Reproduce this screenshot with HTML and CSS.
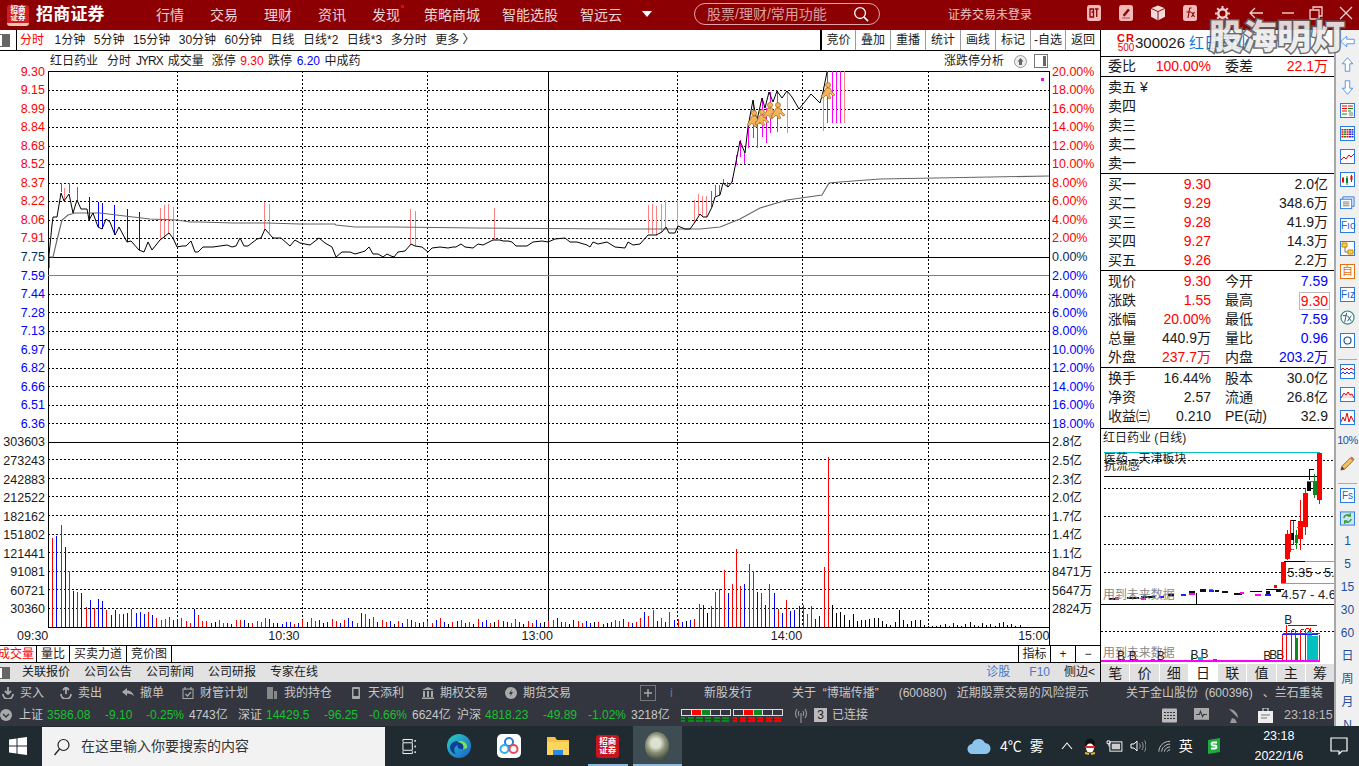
FILE: index.html
```html
<!DOCTYPE html>
<html lang="zh">
<head>
<meta charset="utf-8">
<title>招商证券</title>
<link rel="stylesheet" href="styles.css">
</head>
<body>
<div class="app">
  <header class="titlebar">
    <div class="logo"><span>招商</span><span>证券</span></div>
    <div class="brand">招商证券</div>
    <nav class="menu">
      <a>行情</a><a>交易</a><a>理财</a><a>资讯</a><a class="dotted">发现</a>
    </nav>
    <nav class="menu menu-long">
      <a>策略商城</a><a>智能选股</a><a>智远云</a>
    </nav>
    <span class="menu-more"></span>
    <div class="search">
      <span>股票/理财/常用功能</span>
      <svg class="ico-search" viewBox="0 0 18 18"><circle cx="7.5" cy="7.5" r="5.7" fill="none" stroke="#fff" stroke-width="1.4"/><path d="M11.5 11.5L16 16" stroke="#fff" stroke-width="1.6"/></svg>
    </div>
    <div class="login">证券交易未登录</div>
    <div class="winbtns">
      <svg class="wb" viewBox="0 0 14 16"><rect width="14" height="16" rx="2.5" fill="#f3b9b9"/><path d="M3 4h3.5v8H3zM4.6 7h1.6M8 4h3.5M9.7 4v8" stroke="#8c0004" stroke-width="1.3" fill="none"/></svg>
      <svg class="wb" viewBox="0 0 14 16"><rect width="14" height="16" rx="2.5" fill="#f3b9b9"/><path d="M3 13h8M4 10l5-6 1.5 1.2-5 6z" fill="#8c0004" stroke="#8c0004" stroke-width=".6"/></svg>
      <svg class="wb" viewBox="0 0 15 16"><path d="M7.5 0L15 3v9l-7.5 4L0 12V3z" fill="#f3d9d9"/><path d="M0 3l7.5 3.5L15 3M7.5 6.5V16" stroke="#8c0004" fill="none"/></svg>
      <svg class="wb" viewBox="0 0 14 16"><rect width="14" height="16" rx="2.5" fill="#f3b9b9"/><path d="M5 13l1.5-9c.2-1 1-1.200 2-1M3.500 7H8M8.500 7l3 5M11.500 7l-3 5" stroke="#8c0004" stroke-width="1.100" fill="none"/></svg>
      <svg class="wb wb-gear" viewBox="0 0 16 16"><circle cx="8" cy="8" r="4.500" fill="none" stroke="#f3d0d0" stroke-width="2.600"/><path d="M8 0v3M8 13v3M0 8h3M13 8h3M2.300 2.300l2.100 2.100M11.600 11.600l2.100 2.100M13.700 2.300l-2.100 2.100M4.400 11.600l-2.100 2.100" stroke="#f3d0d0" stroke-width="2.200"/></svg>
      <svg class="wb wb-arrow" viewBox="0 0 14 12"><path d="M14 6H1M6 1L1 6l5 5" fill="none" stroke="#f3d0d0" stroke-width="1.300"/></svg>
      <svg class="wb wb-min" viewBox="0 0 14 12"><path d="M1 6h12" stroke="#f3d0d0" stroke-width="1.400"/></svg>
      <svg class="wb wb-res" viewBox="0 0 14 14"><path d="M4 3V1h9v9h-3M1 4h9v9H1z" fill="none" stroke="#f3d0d0" stroke-width="1.300"/></svg>
      <svg class="wb wb-close" viewBox="0 0 14 14"><path d="M1 1l12 12M13 1L1 13" stroke="#f3d0d0" stroke-width="1.300"/></svg>
    </div>
  </header>

  <div class="workspace">
    <div class="content">
      <div class="upper">
        <section class="chartcol">
          <div class="toolbar">
            <span class="tool-box"></span>
            <div class="periods">
              <a class="on">分时</a><a>1分钟</a><a>5分钟</a><a>15分钟</a><a>30分钟</a><a>60分钟</a><a>日线</a><a>日线*2</a><a>日线*3</a><a>多分时</a><a>更多 〉</a>
            </div>
            <div class="segs">
              <a>竞价</a><a>叠加</a><a>重播</a><a>统计</a><a>画线</a><a>标记</a><a>-自选</a><a>返回</a>
            </div>
          </div>
          <div class="chart-head">
            <span class="h-name">红日药业</span><span class="h-a">分时</span><span class="h-j">JYRX</span><span class="h-v">成交量</span><span class="h-b">涨停</span><span class="h-c red">9.30</span><span class="h-c">跌停</span><span class="h-c blue">6.20</span><span class="h-c">中成药</span>
            <span class="h-right">涨跌停分析</span>
            <svg class="h-ico" viewBox="0 0 13 13"><circle cx="6.500" cy="6.500" r="6" fill="#eee" stroke="#999"/><path d="M6.500 3l3 3.500H8V10H5V6.500H3.500z" fill="#666"/></svg>
            <svg class="h-ico h-ico2" viewBox="0 0 14 14"><rect x=".5" y=".5" width="13" height="13" fill="#fff" stroke="#777"/><rect x="9" y="2" width="3" height="10" fill="#666"/></svg>
          </div>
          <div class="plot-row">
            <div class="axis axis-l">
              <i class="red">9.30</i><i class="red">9.15</i><i class="red">8.99</i><i class="red">8.84</i><i class="red">8.68</i><i class="red">8.52</i><i class="red">8.37</i><i class="red">8.22</i><i class="red">8.06</i><i class="red">7.91</i><i class="navy">7.75</i><i class="blue">7.59</i><i class="blue">7.44</i><i class="blue">7.28</i><i class="blue">7.13</i><i class="blue">6.97</i><i class="blue">6.82</i><i class="blue">6.66</i><i class="blue">6.51</i><i class="blue">6.36</i>
              <i>303603</i><i>273243</i><i>242883</i><i>212522</i><i>182162</i><i>151802</i><i>121441</i><i>91081</i><i>60721</i><i>30360</i>
            </div>
            <svg class="plot" viewBox="48 71 1002 557" shape-rendering="crispEdges">
              <path class="dash" d="M48 90.500H1049M48 109.500H1049M48 127.500H1049M48 146.500H1049M48 164.500H1049M48 183.500H1049M48 201.500H1049M48 220.500H1049M48 238.500H1049M48 294.500H1049M48 312.500H1049M48 331.500H1049M48 349.500H1049M48 368.500H1049M48 386.500H1049M48 405.500H1049M48 423.500H1049M48 459.500H1049M48 478.500H1049M48 496.500H1049M48 515.500H1049M48 534.500H1049M48 552.500H1049M48 571.500H1049M48 589.500H1049M48 608.500H1049M177.500 71V627M302.500 71V627M427.500 71V627M677.500 71V627M802.500 71V627M928.500 71V627"/>
              <path class="solid" d="M48 71.500H1049M48 442.500H1049M48 627.500H1049M48.500 71V627M1049.500 71V628M548.500 71V627"/>
              <path class="solid thick" d="M48 257.500H1049"/>
              <path class="gray" d="M48 275.500H1049"/>
              <path class="sig-p" d="M64.500 188V201M160.500 208V240M164.500 205V238M168.500 204V233M173.500 207V238M264.500 202V229M269.500 204V233M410.500 209V244M415.500 211V246M494.500 208V240M648.500 205V233M652.500 204V234M656.500 206V236M661.500 204V232M665.500 200V227M677.500 200V227M694.500 200V223M698.500 194V215M702.500 196V216M706.500 196V217M787.500 91V133M823.500 87V131M844.500 71V123"/>
              <path class="sig-m" d="M61.500 183V192M69.500 183V193M77.500 187V200M711.500 191V207M715.500 185V196M719.500 185V195M723.500 179V183M727.500 182V187M732.500 178V182M736.500 155V165M740.500 140V157M744.500 153V164M748.500 126V148M753.500 100V138M757.500 120V148M762.500 98V137M766.500 108V143M770.500 92V133M777.500 90V132M827.500 71V123M832.500 71V123M836.500 71V123M840.500 71V123"/>
              <path class="sig-b" d="M89.500 197V220M98.500 202V227M102.500 203V229M114.500 205V235M127.500 209V242M139.500 212V250"/>
              <g shape-rendering="auto">
                <polyline class="avg" points="50,257 53,257 57,240 62,220 68,215 75,213 100,213 133,217 150,219 177,220 190,222 200,222 233,223 267,223 300,224 335,224 336,225 355,227 393,227 476,228 622,229 700,229 720,227 740,219 760,208 787,200 822,195 829,183 840,182 880,179 1049,176"/>
                <polyline class="price" points="49,268 49,255 52,225 53,217 57,217 61,193 64,201 69,194 73,213 77,200 81,209 87,209 89,220 93,213 98,227 102,229 106,219 110,222 115,235 119,227 127,242 131,241 139,250 144,252 148,242 152,250 160,240 169,233 173,238 177,247 182,246 186,246 191,241 195,252 198,252 203,247 213,247 220,246 227,245 232,247 236,246 240,238 244,246 248,246 257,239 261,238 265,229 273,238 281,238 290,246 295,240 300,243 310,245 319,238 325,243 332,247 336,257 342,252 350,252 355,254 362,252 365,251 369,247 373,254 378,254 383,257 387,254 391,256 394,257 398,252 405,251 411,244 415,246 422,247 428,252 432,248 440,247 448,248 453,247 456,247 461,244 465,247 473,248 478,244 483,245 493,240 500,240 503,241 508,241 512,242 516,246 527,246 533,242 542,241 548,242 555,239 565,238 570,242 577,242 587,245 590,247 593,242 598,244 607,242 615,247 625,248 628,242 633,245 640,244 648,235 656,235 662,232 666,227 669,233 675,233 678,226 685,229 690,229 695,222 700,214 703,217 707,217 712,207 715,197 720,195 723,183 728,187 732,182 735,167 740,141 745,153 748,127 753,100 755,112 757,120 762,98 765,108 769,92 773,102 777,91 782,98 787,91 792,97 799,109 811,94 820,103 823,92 827,72"/>
                <use href="#runner" x="746" y="110"/><use href="#runner" x="754" y="109"/><use href="#runner" x="762" y="102"/><use href="#runner" x="770" y="102"/><use href="#runner" x="820" y="82"/>
              </g>
              <g id="vol-bars"></g>
              <rect x="1041" y="78" width="3" height="3" fill="#f0f"/>
              <defs>
                <g id="runner" shape-rendering="auto">
                  <circle cx="8" cy="3" r="2.500" fill="#f4b45c" stroke="#a06a20" stroke-width=".7"/>
                  <path d="M6 6l4 0 2 4 3 3-2 1-3-3-1 2 2 3-2 1-3-4-3 3-2-1 3-5z" fill="#f4b45c" stroke="#a06a20" stroke-width=".7"/>
                </g>
              </defs>
            </svg>
            <div class="axis axis-r">
              <i class="red">20.00%</i><i class="red">18.00%</i><i class="red">16.00%</i><i class="red">14.00%</i><i class="red">12.00%</i><i class="red">10.00%</i><i class="red">8.00%</i><i class="red">6.00%</i><i class="red">4.00%</i><i class="red">2.00%</i><i class="navy">0.00%</i><i class="blue">2.00%</i><i class="blue">4.00%</i><i class="blue">6.00%</i><i class="blue">8.00%</i><i class="blue">10.00%</i><i class="blue">12.00%</i><i class="blue">14.00%</i><i class="blue">16.00%</i><i class="blue">18.00%</i>
              <i>2.8亿</i><i>2.5亿</i><i>2.3亿</i><i>2.0亿</i><i>1.7亿</i><i>1.4亿</i><i>1.1亿</i><i>8471万</i><i>5647万</i><i>2824万</i>
            </div>
          </div>
          <div class="times"><span>09:30</span><span>10:30</span><span>13:00</span><span>14:00</span><span>15:00</span></div>
          <div class="ind-tabs">
            <a class="ind-on">成交量</a><a>量比</a><a>买卖力道</a><a>竞价图</a>
            <span class="ind-right"><a>指标</a><a>+</a><a>−</a></span>
          </div>
          <div class="infobar">
            <span class="tool-box tool-box2"></span>
            <a>关联报价</a><a>公司公告</a><a>公司新闻</a><a>公司研报</a><a>专家在线</a>
            <span class="info-right"><a class="lb">诊股</a><a class="lb">F10</a><a class="side-toggle">侧边&lt;</a></span>
          </div>
        </section>

        <aside class="panel">
          <div class="p-head">
            <div class="cr"><b>CR</b><small>500</small></div>
            <span class="code">300026</span><span class="pname">红日药业</span>
          </div>
          <div class="sec sec-wb">
            <div class="q"><p><span>委比</span><em class="red">100.00%</em></p><p><span>委差</span><em class="red">22.1万</em></p></div>
          </div>
          <div class="sec sec-5">
            <div class="q"><p><span>卖五 ¥</span></p><p></p></div>
            <div class="q"><p><span>卖四</span></p><p></p></div>
            <div class="q"><p><span>卖三</span></p><p></p></div>
            <div class="q"><p><span>卖二</span></p><p></p></div>
            <div class="q"><p><span>卖一</span></p><p></p></div>
          </div>
          <div class="sec sec-5">
            <div class="q"><p><span>买一</span><em class="red">9.30</em></p><p><span></span><em>2.0亿</em></p></div>
            <div class="q"><p><span>买二</span><em class="red">9.29</em></p><p><span></span><em>348.6万</em></p></div>
            <div class="q"><p><span>买三</span><em class="red">9.28</em></p><p><span></span><em>41.9万</em></p></div>
            <div class="q"><p><span>买四</span><em class="red">9.27</em></p><p><span></span><em>14.3万</em></p></div>
            <div class="q"><p><span>买五</span><em class="red">9.26</em></p><p><span></span><em>2.2万</em></p></div>
          </div>
          <div class="sec sec-5">
            <div class="q"><p><span>现价</span><em class="red">9.30</em></p><p><span>今开</span><em class="blue">7.59</em></p></div>
            <div class="q"><p><span>涨跌</span><em class="red">1.55</em></p><p><span>最高</span><em class="red boxed">9.30</em></p></div>
            <div class="q"><p><span>涨幅</span><em class="red">20.00%</em></p><p><span>最低</span><em class="blue">7.59</em></p></div>
            <div class="q"><p><span>总量</span><em>440.9万</em></p><p><span>量比</span><em class="blue">0.96</em></p></div>
            <div class="q"><p><span>外盘</span><em class="red">237.7万</em></p><p><span>内盘</span><em class="blue">203.2万</em></p></div>
          </div>
          <div class="sec sec-3">
            <div class="q"><p><span>换手</span><em>16.44%</em></p><p><span>股本</span><em>30.0亿</em></p></div>
            <div class="q"><p><span>净资</span><em>2.57</em></p><p><span>流通</span><em>26.8亿</em></p></div>
            <div class="q"><p><span>收益㈢</span><em>0.210</em></p><p><span>PE(动)</span><em>32.9</em></p></div>
          </div>
          <div class="mini-name">红日药业 (日线)</div>
          <svg class="mini" viewBox="1100 450 234 212" shape-rendering="crispEdges">
            <path class="dash" d="M1103 460.500H1334M1103 488.500H1334M1103 516.500H1334M1103 544.500H1334M1103 572.500H1334M1100 631.500H1334"/>
            <path d="M1103 452.500H1320" stroke="#00c0c0" fill="none"/>
            <path class="solid" d="M1103 476.500H1320M1100 604.500H1334M1195.500 593V604"/>
            <path d="M1285 561.500H1334M1281 583.500H1334" stroke="#999" fill="none"/>
            <path d="M1317 453h5v47h-5zM1303 493h5v34h-5zM1298 521h5v18h-5zM1285 534h5v25h-5zM1281 562h5v21h-5zM1274 585h3v3h-3z" fill="#f00"/>
            <path d="M1319.500 453V504M1305.500 488V535M1300.500 500V550M1287.500 530V560M1290.500 520V552M1293.500 521V545" stroke="#f00" fill="none"/>
            <path d="M1307 482h4v9h-4zM1291 533h3v7h-3zM1312 488v8M1297 537h-2v3h2z" fill="#000"/>
            <path d="M1313 481h4v14h-4zM1295 535h3v8h-3z" fill="#0a8a1e"/>
            <path d="M1314.500 474V498M1296.500 530V549" stroke="#0a8a1e" fill="none"/>
            <path d="M1309 469.500H1314M1309.500 469V480M1284 561.500H1305M1291 520.500H1296M1266 589.500H1284M1250 591.500H1262" stroke="#000" fill="none"/>
            <path d="M1307 481h8v1h-8zM1291 549h3v1h-3zM1297 527h4v1h-4z" fill="#f0f"/>
            <path d="M1108 598h6v2h-6zM1126 597h12v2h-12zM1140 596h14v2h-14zM1167 594h6v2h-6zM1188 591h6v2h-6zM1199 589h6v3h-6zM1214 590h5v2h-5zM1222 591h6v2h-6zM1234 593h8v2h-8zM1266 591h4v3h-4zM1276 589h5v3h-5z" fill="#111"/>
            <path d="M1114 597h4v3h-4zM1140 598h5v2h-5zM1188 593h6v2h-6zM1240 592h4v2h-4zM1255 594h6v2h-6zM1208 589h4v2h-4z" fill="#f0f"/>
            <path d="M1158 596h5v2h-5zM1180 594h5v2h-5zM1265 594h6v2h-6zM1208 590h5v2h-5z" fill="#22f"/>
            <text class="mt" x="1103" y="463">医药 - 天津板块</text>
            <text class="mt" x="1103" y="470">抗流感</text>
            <text class="mt mn" x="1287" y="577">5.35 - 5.</text>
            <text class="mt mn" x="1281" y="599">4.57 - 4.6</text>
            <text class="mt mg" x="1102" y="599">用到未来数据</text>
            <text class="mt mg" x="1102" y="657">用到未来数据</text>
            <text class="mt" x="1116" y="660">B</text><text class="mt" x="1128" y="660">B</text><text class="mt" x="1156" y="660">B</text><text class="mt" x="1190" y="659">B</text><text class="mt" x="1200" y="658">B</text><text class="mt" x="1263" y="660">B</text><text class="mt" x="1269" y="659">B</text><text class="mt" x="1276" y="659">B</text><text class="mt" x="1284" y="624">B</text>
            <path d="M1282.500 634V661M1286.500 625V661M1291.500 630V661M1300.500 630V661M1305.500 629V661M1310.500 628V661M1319.500 635V661M1282.500 634H1320M1291.500 630H1295V661M1300.500 630H1304M1305.500 629H1309V661M1319.500 635V661" stroke="#f00" fill="none"/>
            <path d="M1295 638h3v23h-3zM1190 655h2v6h-2zM1120 659h4v2h-4zM1134 659h3v2h-3zM1150 659h4v2h-4zM1212 659h5v2h-5z" fill="#0a8a1e"/>
            <path d="M1307 632h5v29h-5zM1312 636h6v25h-6zM1197 657h5v4h-5z" fill="#00c0c0"/>
            <path d="M1288 625.500H1317M1282 634.500H1318" stroke="#22f" fill="none"/>
            <path d="M1100 660h220v2h-220z" fill="#f0f"/>
          </svg>
          <div class="mini-tabs"><a>笔</a><a>价</a><a>细</a><a class="act">日</a><a>联</a><a>值</a><a>主</a><a>筹</a></div>
        </aside>
      </div>

      <div class="darkbars">
        <div class="dk-row">
          <a class="dk"><svg viewBox="0 0 12 12"><path d="M6 0v7M3 4l3 3 3-3M1 7a5 5 0 0 0 10 0" fill="none" stroke="#aaa" stroke-width="1.800"/></svg>买入</a>
          <a class="dk"><svg viewBox="0 0 12 12"><path d="M6 7V0M3 3l3-3 3 3M1 7a5 5 0 0 0 10 0" fill="none" stroke="#aaa" stroke-width="1.800"/></svg>卖出</a>
          <a class="dk"><svg viewBox="0 0 12 12"><path d="M0 5l5-4v2.500c4 0 6 2.500 7 6-1.500-2-3.500-3-7-3V9z" fill="#aaa"/></svg>撤单</a>
          <a class="dk"><svg viewBox="0 0 12 12"><rect x="1" y="2" width="10" height="9.500" fill="none" stroke="#aaa"/><path d="M3 0v3M9 0v3M3.500 7l2 2 3.500-4" fill="none" stroke="#aaa" stroke-width="1.200"/></svg>财管计划</a>
          <a class="dk"><svg viewBox="0 0 12 12"><path d="M1 0h6v12H1zM8 4h3v8H8z" fill="#888"/></svg>我的持仓</a>
          <a class="dk"><svg viewBox="0 0 12 12"><rect x="2" y="0" width="8" height="12" rx="1" fill="#aaa"/><rect x="3.500" y="2" width="5" height="7" fill="#33363f"/></svg>天添利</a>
          <a class="dk"><svg viewBox="0 0 12 12"><path d="M6 0l6 3H0zM1 4h2v6H1zM5 4h2v6H5zM9 4h2v6H9zM0 10.500h12V12H0z" fill="#aaa"/></svg>期权交易</a>
          <a class="dk"><svg viewBox="0 0 12 12"><circle cx="6" cy="6" r="6" fill="#aaa"/><path d="M7 2L4 7h2l-1 3 3-5H6z" fill="#33363f"/></svg>期货交易</a>
          <svg class="dk-plus" viewBox="0 0 16 16"><rect x=".5" y=".5" width="15" height="15" fill="none" stroke="#777"/><path d="M8 4v8M4 8h8" stroke="#aaa" stroke-width="1.400"/></svg>
          <span class="dk-i">i</span>
          <span class="dk-n1">新股发行</span>
          <span class="dk-n2">关于  “博瑞传播”      (600880)   近期股票交易的风险提示</span>
          <span class="dk-n3">关于金山股份  (600396)   、兰石重装</span>
        </div>
        <div class="dk-row idx">
          <svg class="idx-ico" viewBox="0 0 12 12"><circle cx="6" cy="6" r="6" fill="#aaa"/><path d="M3 5l3 3 3-3" fill="none" stroke="#33363f" stroke-width="1.500"/></svg>
          <div class="ix"><span>上证</span><b class="n1">3586.08</b><b class="n2">-9.10</b><b class="n3">-0.25%</b><span class="n4">4743亿</span></div>
          <div class="ix"><span>深证</span><b class="n1">14429.5</b><b class="n2 n2b">-96.25</b><b class="n3">-0.66%</b><span class="n4">6624亿</span></div>
          <div class="ix"><span>沪深</span><b class="n1">4818.23</b><b class="n2 n2b">-49.89</b><b class="n3">-1.02%</b><span class="n4">3218亿</span></div>
          <div class="meters">
            <div class="meter"><div class="m-box"><i></i><i class="m-r"></i><i class="m-g"></i><i></i><i></i></div><div class="m-dash m-dg"></div></div>
            <div class="meter"><div class="m-box"><i></i><i class="m-r"></i><i class="m-g"></i><i></i><i></i></div><div class="m-dash m-dr"></div></div>
          </div>
          <svg class="antenna" viewBox="0 0 14 16"><path d="M7 6v10M3 2C1 5 1 8 3 11M11 2c2 3 2 6 0 9M5 4c-1 2-1 3 0 5M9 4c1 2 1 3 0 5" fill="none" stroke="#999" stroke-width="1.100"/></svg>
          <span class="conn-n">3</span><span class="conn">已连接</span>
          <div class="st-icons">
            <svg viewBox="0 0 15 14"><rect width="15" height="14" rx="1" fill="#bbb"/><path d="M2 4h11M2 7h11M2 10h11" stroke="#33363f" stroke-dasharray="2 1"/></svg>
            <svg viewBox="0 0 14 14"><rect width="14" height="11" fill="#aaa"/><path d="M5 14h4M7 11v3M2 6h3l1-3 2 5 1-2h3" stroke="#33363f" fill="none"/></svg>
            <svg viewBox="0 0 13 15"><path d="M2 1c5 0 9 4 9 9zM5 10l-2 5h7l-2-4" fill="#999"/></svg>
            <svg viewBox="0 0 15 15"><path d="M0 3h15v12H0z" fill="#eee"/><path d="M5 3V0h5v3" fill="none" stroke="#eee"/><path d="M3 7h9M3 10h6" stroke="#777"/></svg>
          </div>
          <span class="clock">23:18:15</span>
        </div>
      </div>
    </div>

    <aside class="sidecol">
      <svg class="s-ico" viewBox="0 0 20 16"><path d="M1 8l8-7v4h10v6H9v4z" fill="#fff" stroke="#2a7ae0"/></svg>
      <svg class="s-ico" viewBox="0 0 16 20"><path d="M8 1l7 8h-4v10H5V9H1z" fill="#fff" stroke="#2a7ae0"/></svg>
      <svg class="s-ico" viewBox="0 0 16 20"><path d="M8 19l7-8h-4V1H5v10H1z" fill="#fff" stroke="#2a7ae0"/></svg>
      <svg class="s-ico" viewBox="0 0 15 15"><rect x=".5" y=".5" width="14" height="14" fill="#fff" stroke="#2a7ae0"/><path d="M2 3h5M8 3h5M2 5.500h5M2 8h5" stroke="#e00"/><path d="M8 5.500h5M8 8h3M2 11h5" stroke="#0a8a1e"/><circle cx="11" cy="11" r="2.500" fill="#bbb"/></svg>
      <svg class="s-ico" viewBox="0 0 15 15"><rect x=".5" y=".5" width="14" height="14" fill="#fff" stroke="#2a7ae0"/><path d="M2.500 3v9M7.500 3v9" stroke="#e00" stroke-width="2" stroke-dasharray="1.500 .8"/><path d="M5 3v9" stroke="#0a8a1e" stroke-width="2" stroke-dasharray="1.500 .8"/><path d="M10 3v9M12.500 3v9" stroke="#22f" stroke-width="2" stroke-dasharray="1.500 .8"/></svg>
      <svg class="s-ico" viewBox="0 0 15 15"><rect x=".5" y=".5" width="14" height="14" fill="#fff" stroke="#2a7ae0"/><path d="M1 11l3-3 2 2 3-4 2 2 3-3" fill="none" stroke="#e00"/></svg>
      <svg class="s-ico" viewBox="0 0 15 15"><rect x=".5" y=".5" width="14" height="14" fill="#fff" stroke="#2a7ae0"/><path d="M3 5v6M11.500 3v7" stroke="#e00"/><path d="M7 4v9" stroke="#0a8a1e"/><path d="M2 6h2v4H2zM10.500 4h2v4h-2z" fill="#e00"/><path d="M6 6h2v5H6z" fill="#0a8a1e"/></svg>
      <svg class="s-ico" viewBox="0 0 16 15"><path d="M3 1.500h12v10H3z" fill="#e8f0fa" stroke="#2a7ae0"/><rect x=".5" y="4" width="12" height="10" fill="#fff" stroke="#2a7ae0"/><path d="M3 7h7M3 9h7M3 11h7" stroke="#777"/></svg>
      <span class="s-ico s-t">Fıo</span>
      <svg class="s-ico" viewBox="0 0 15 15"><rect x=".5" y=".5" width="14" height="14" fill="#fff" stroke="#2a7ae0"/><path d="M2 2h5v4H2z" fill="#fc5" stroke="#c80"/><path d="M8 9h5v4H8z" fill="#fc5" stroke="#c80"/><path d="M5 6v5h3" stroke="#777" fill="none"/></svg>
      <span class="s-ico s-t s-or">自</span>
      <span class="s-ico s-t">Fız</span>
      <svg class="s-ico" viewBox="0 0 16 16"><circle cx="8" cy="8" r="7" fill="#fff" stroke="#1e8c7a" stroke-width="1.200"/><path d="M5 13l2-10M3 6h4M8 6l4 6M12 6l-4 6" stroke="#24507a" fill="none"/></svg>
      <svg class="s-ico" viewBox="0 0 15 15"><rect x=".5" y=".5" width="14" height="14" fill="#fff" stroke="#2a7ae0"/><circle cx="7.500" cy="7.500" r="3.500" fill="none" stroke="#24507a" stroke-width="1.200"/></svg>
      <span class="s-sep"></span>
      <svg class="s-ico" viewBox="0 0 15 15"><rect x=".5" y=".5" width="14" height="14" fill="#fff" stroke="#2a7ae0"/><path d="M1 6l2-2 2 2 2-2 2 2 2-2 3 2" stroke="#e00" fill="none"/><path d="M1 10l2-2 2 2 2-2 2 2 2-2 3 2" stroke="#22f" fill="none"/></svg>
      <svg class="s-ico" viewBox="0 0 15 15"><rect x=".5" y=".5" width="14" height="14" fill="#fff" stroke="#2a7ae0"/><path d="M1 11l3-5 2 2 2-3 2 3 2-1 2 4" stroke="#e00" fill="#fdd"/></svg>
      <svg class="s-ico" viewBox="0 0 15 15"><rect x=".5" y=".5" width="14" height="14" fill="#fff" stroke="#2a7ae0"/><path d="M1 12l2-5 2 4 2-8 2 9 2-6 3 6" stroke="#e00" fill="none"/></svg>
      <span class="s-txt s-pc">10%</span>
      <svg class="s-ico" viewBox="0 0 16 16"><path d="M1 15l1-4L11 2l3 3-9 9z" fill="#f0c060" stroke="#a06a20"/><path d="M11 2l1.500-1.500 3 3L14 5z" fill="#e06060"/><path d="M1 15l1-4 3 3z" fill="#444"/></svg>
      <span class="s-sep s-sep2"></span>
      <span class="s-ico s-t">Fs</span>
      <svg class="s-ico" viewBox="0 0 16 15"><rect x=".5" y=".5" width="15" height="14" fill="#cfe3f8" stroke="#2a7ae0"/><path d="M4 7a4 4 0 0 1 7-2M12 8a4 4 0 0 1-7 2M11 2v3H8M5 13v-3h3" fill="none" stroke="#34a434" stroke-width="1.500"/></svg>
      <span class="s-txt">1</span><span class="s-txt">5</span><span class="s-txt">15</span><span class="s-txt">30</span><span class="s-txt">60</span><span class="s-txt">日</span><span class="s-txt">周</span><span class="s-txt">月</span><span class="s-txt">N</span>
    </aside>
  </div>

  <footer class="taskbar">
    <svg class="start" viewBox="0 0 18 18"><path d="M0 2.500L7.500 1.400V8.500H0zM8.500 1.200L18 0V8.500H8.500zM0 9.500H7.500V16.600L0 15.500zM8.500 9.500H18V18L8.500 16.800z" fill="#fff"/></svg>
    <div class="tsearch">
      <svg viewBox="0 0 18 18"><circle cx="10.500" cy="7" r="5.500" fill="none" stroke="#222" stroke-width="1.200"/><path d="M6.500 11L1.500 17" stroke="#222" stroke-width="1.300"/></svg>
      <span>在这里输入你要搜索的内容</span>
    </div>
    <div class="apps">
      <span class="app-c"><svg viewBox="0 0 16 18"><path d="M1 4V1.500h10V4M1 14v2.500h10V14M1 5h10v8H1z" fill="none" stroke="#fff"/><path d="M14 2v2M14 8v2M14 14v2" stroke="#fff" stroke-width="1.400"/></svg></span>
      <span class="app-c"><svg class="app-i" viewBox="0 0 24 24"><defs><linearGradient id="eg" x1="0" y1="0" x2="1" y2="1"><stop offset="0" stop-color="#2ad1c4"/><stop offset="1" stop-color="#1a5fc8"/></linearGradient></defs><circle cx="12" cy="12" r="12" fill="url(#eg)"/><path d="M3 13c1-7 12-8 16-2 1 3-1 4-4 4-4 0-5-2-4-4-4 1-5 6-2 9-3 0-6-3-6-7z" fill="#0c3f9a"/><path d="M10 8c3-2 9-1 10 4 1 2-1 3-4 3 2-4-2-7-6-7z" fill="#7fe05a"/></svg></span>
      <span class="app-c"><svg class="app-i" viewBox="0 0 24 24"><rect width="24" height="24" rx="5" fill="#fff"/><circle cx="12" cy="8" r="4" fill="none" stroke="#2a7ae0" stroke-width="2"/><circle cx="7.500" cy="15" r="4" fill="none" stroke="#2ab0e8" stroke-width="2"/><circle cx="16.500" cy="15" r="4" fill="none" stroke="#e84a5a" stroke-width="2"/></svg></span>
      <span class="app-c"><svg class="app-i" viewBox="0 0 24 24"><path d="M1 3h8l2 3h12v15H1z" fill="#f5c242"/><path d="M1 8h22v13H1z" fill="#fbd55c"/><path d="M7 16h10v5H7z" fill="#2a8ae0"/></svg></span>
      <span class="app-c app-ul"><span class="cmb"><span>招商</span><span>证券</span></span></span>
      <span class="app-c app-act app-ul2"><span class="pic"></span></span>
    </div>
    <div class="tray">
      <svg class="cloud" viewBox="0 0 24 16"><path d="M6 16a5 5 0 0 1-1-10 7 7 0 0 1 13-1 5.500 5.500 0 0 1 0 11z" fill="#8cc4ee"/></svg>
      <span class="temp">4℃</span><span class="fog">雾</span>
      <svg class="t-up" viewBox="0 0 12 8"><path d="M1 7l5-6 5 6" fill="none" stroke="#fff" stroke-width="1.100"/></svg>
      <svg class="t-qq" viewBox="0 0 14 18"><ellipse cx="7" cy="8" rx="5.500" ry="7" fill="#111" stroke="#333" stroke-width=".5"/><ellipse cx="7" cy="11" rx="4" ry="4.500" fill="#fff"/><path d="M2 9h10v2H2z" fill="#e22"/><path d="M2 16l4 1M12 16l-4 1" stroke="#f5b020" stroke-width="2"/></svg>
      <svg class="t-bat" viewBox="0 0 18 14"><rect x="4" y="2" width="13" height="10" fill="none" stroke="#fff"/><rect x="6" y="4" width="9" height="6" fill="#ccc"/><path d="M1 1v3h3V1zM3 4v3" stroke="#fff" fill="none"/></svg>
      <svg class="t-vol" viewBox="0 0 16 14"><path d="M1 5h3l3-3v10L4 9H1z" fill="none" stroke="#fff"/><path d="M9.500 4.500c1 1.500 1 3.500 0 5M12 3c1.500 2 1.500 6 0 8M14.500 1.500c2 3 2 8 0 11" stroke="#999" fill="none"/></svg>
      <svg class="t-wifi" viewBox="0 0 16 14"><path d="M2 13c0-6 5-11 12-11M5 13c0-4 4-8 9-8M8 13c0-3 3-5 6-5M11 13a3 3 0 0 1 3-2" fill="none" stroke="#ccc"/></svg>
      <span class="t-ime">英</span>
      <svg class="t-s" viewBox="0 0 14 16"><path d="M1 2l12-2v14L1 16z" fill="#1eaa3c"/><path d="M10 4.500H6a1.500 1.500 0 0 0 0 3h2a1.500 1.500 0 0 1 0 3H4" fill="none" stroke="#fff" stroke-width="1.800"/></svg>
      <div class="t-time"><span>23:18</span><span>2022/1/6</span></div>
      <svg class="t-note" viewBox="0 0 18 18"><path d="M1 1h16v13h-5l-3 3v-3H1z" fill="none" stroke="#fff" stroke-width="1.200"/></svg>
    </div>
  </footer>

  <div class="watermark">股海明灯</div>
</div>
<script src="chart.js"></script>
</body>
</html>
```
FILE: styles.css
```css
* { box-sizing: border-box; }
html, body { margin: 0; padding: 0; }
body { width: 1359px; height: 766px; overflow: hidden; background: #fff; color: #1a1a1a; font: 12px/1.2 "Liberation Sans", "Noto Sans CJK SC", sans-serif; }
a { color: inherit; text-decoration: none; }
.red { color: #f00; }
.blue { color: #00f; }
.navy { color: #0a2a5a; }
.app { position: relative; width: 1359px; height: 766px; display: flex; flex-direction: column; }

/* title bar */
.titlebar { height: 30px; background: #8c0004; display: flex; align-items: center; color: #ecd2d2; flex: none; }
.logo { width: 22px; height: 21px; margin-left: 7px; background: #cf1d22; border-radius: 3px; border-bottom: 3px solid #e9c8b0; color: #fff; font-size: 7.500px; line-height: 8px; font-weight: 700; display: flex; flex-direction: column; align-items: center; padding-top: 1px; }
.brand { margin-left: 7px; width: 70px; color: #fff; font-size: 17px; font-weight: 700; letter-spacing: .2px; white-space: nowrap; }
.menu { display: flex; gap: 26px; font-size: 14px; margin-left: 50px; }
.menu-long { gap: 22px; margin-left: 24px; }
.dotted { position: relative; }
.dotted::after { content: ""; position: absolute; right: -4px; top: -2px; width: 3px; height: 3px; background: #f00; }
.menu-more { width: 0; height: 0; margin-left: 20px; margin-top: -3px; border: 5px solid transparent; border-top: 6px solid #fff; border-bottom: 0; }
.search { margin-left: 42px; width: 186px; height: 22px; border: 1px solid #e2a4a4; border-radius: 11px; display: flex; align-items: center; justify-content: space-between; padding: 0 9px 0 12px; font-size: 14px; color: #d9a0a0; margin-top: -2px; }
.ico-search { width: 17px; height: 17px; }
.login { margin-left: 68px; width: 85px; font-size: 12px; color: #e6c4c4; white-space: nowrap; }
.winbtns { margin-left: 54px; display: flex; align-items: center; margin-top: -4px; }
.wb { width: 14px; height: 16px; margin-right: 18px; flex: none; }
.wb-gear { width: 15px; height: 15px; margin-right: 19px; }
.wb-arrow { width: 14px; height: 12px; margin-right: 18px; }
.wb-min { width: 14px; height: 12px; margin-right: 14px; }
.wb-res { width: 14px; height: 14px; margin-right: 16px; }
.wb-close { width: 14px; height: 14px; margin-right: 0; }

.workspace { flex: none; height: 696px; display: flex; }
.content { width: 1334px; display: flex; flex-direction: column; }
.upper { height: 652px; display: flex; }
.chartcol { width: 1100px; display: flex; flex-direction: column; }

/* toolbar */
.toolbar { height: 21px; display: flex; align-items: center; border-bottom: 1px solid #000; flex: none; }
.tool-box { width: 10px; height: 13px; border: 1px solid #666; border-left: 0; background: linear-gradient(90deg, #fff 0 2px, #666 2px 9px); flex: none; }
.periods { height: 20px; margin-left: 6px; border-left: 1px solid #000; padding-left: 3px; display: flex; align-items: center; gap: 8.500px; white-space: nowrap; }
.periods .on { color: #f00; margin-right: 2px; }
.segs { margin-left: auto; display: flex; height: 20px; border-left: 2px solid #000; }
.segs a { width: 35px; display: flex; align-items: center; justify-content: center; border-left: 1px solid #9a9a9a; white-space: nowrap; }
.segs a:first-child { border-left: 0; width: 33px; }

.chart-head { height: 20px; flex: none; display: flex; align-items: center; padding-left: 50px; white-space: nowrap; }
.h-a { margin-left: 9px; }
.h-j { margin-left: 5px; letter-spacing: -1px; }
.h-v { margin-left: 5px; }
.h-b { margin-left: 8px; }
.h-c { margin-left: 4.500px; }
.h-right { margin-left: auto; }
.h-ico { width: 13px; height: 13px; margin-left: 10px; }
.h-ico2 { width: 14px; height: 14px; margin: 0 52px 0 7px; }

.plot-row { height: 557px; flex: none; display: flex; }
.plot { width: 1002px; height: 557px; display: block; flex: none; }
.axis { width: 48px; height: 557px; margin-top: -8.500px; display: flex; flex-direction: column; flex: none; }
.axis-r { width: 50px; }
.axis i { font-style: normal; height: 18.550px; line-height: 18.550px; font-size: 12.500px; white-space: nowrap; flex: none; }
.axis-l i { text-align: right; padding-right: 3px; }
.axis-r i { padding-left: 2px; }

.dash { fill: none; stroke: #000; stroke-dasharray: 2 2; }
.solid { fill: none; stroke: #000; }
.thick { stroke-width: 1.500; }
.gray { fill: none; stroke: #808080; }
.sig-p { fill: none; stroke: #ff8080; }
.sig-m { fill: none; stroke: #f0f; }
.sig-b { fill: none; stroke: #00f; }
.avg { fill: none; stroke: #666; stroke-width: 1.100; }
.price { fill: none; stroke: #000; stroke-width: 1; }

.times { height: 18px; flex: none; border-bottom: 1px solid #000; display: flex; align-items: center; font-size: 12.500px; padding-left: 17px; position: relative; }
.times::after { content: ""; position: absolute; left: 1049px; top: 0; bottom: 0; width: 1px; background: #000; }
.times span:nth-child(2) { margin-left: 220px; }
.times span:nth-child(3) { margin-left: 222px; }
.times span:nth-child(4) { margin-left: 218px; }
.times span:nth-child(5) { margin-left: 216px; }

.ind-tabs { height: 17px; flex: none; border-bottom: 1px solid #000; display: flex; white-space: nowrap; overflow: hidden; }
.ind-tabs > a { display: flex; align-items: center; padding: 0 4px; border-right: 1px solid #000; margin-left: 0; }
.ind-tabs .ind-on { color: #f00; padding: 0 2px 0 0; margin-left: -2px; width: 39px; justify-content: flex-end; }
.ind-right { margin-left: auto; display: flex; }
.ind-right a { display: flex; align-items: center; justify-content: center; width: 25px; border-left: 1px solid #000; }
.ind-right a:first-child { width: 32px; }

.infobar { height: 19px; flex: none; background: #e2e2e2; display: flex; align-items: center; gap: 14px; white-space: nowrap; }
.tool-box2 { margin-right: -2px; width: 10px; height: 12px; }
.info-right { margin-left: auto; display: flex; gap: 19px; padding-right: 5px; }
.side-toggle { margin-left: -5px; }
.lb { color: #4a78c8; }

/* right panel */
.panel { width: 234px; border-left: 1px solid #000; display: flex; flex-direction: column; font-size: 14px; }
.p-head { height: 27px; flex: none; border-bottom: 1px solid #000; display: flex; align-items: center; padding-left: 16px; white-space: nowrap; }
.cr { width: 18px; display: flex; flex-direction: column; align-items: center; color: #e00; line-height: 10px; }
.cr b { font-size: 11px; letter-spacing: 1px; }
.cr small { font-size: 10px; }
.code { font-size: 15px; }
.pname { color: #0a78e0; margin-left: 4px; font-size: 15px; }
.sec { flex: none; border-bottom: 1px solid #000; padding: 0 5px 0 7px; }
.sec-wb { height: 20px; }
.sec-5 { height: 97px; padding-top: 1px; }
.sec-3 { height: 61px; padding-top: 1px; }
.q { height: 19px; display: grid; grid-template-columns: 103px 103px; column-gap: 14px; align-items: center; }
.q p { margin: 0; display: flex; justify-content: space-between; align-items: center; white-space: nowrap; }
.q em { font-style: normal; }
.boxed { border: 1px solid #bbb; padding: 0 1px; margin-right: -2px; height: 18px; line-height: 16px; }
.mini-name { height: 21px; flex: none; display: flex; align-items: center; padding: 0 0 3px 2px; font-size: 12px; color: #222; }
.mini { width: 233px; height: 212px; flex: none; display: block; }
.mt { font-size: 12px; fill: #222; shape-rendering: auto; }
.mn { font-size: 13px; }
.mg { fill: #888; }
.mini-tabs { height: 20px; flex: none; display: flex; gap: 1px; background: #fff; }
.mini-tabs a { flex: 1; margin-top: 2px; background: #e0e0e0; display: flex; align-items: center; justify-content: center; }
.mini-tabs .act { background: #fff; }

/* dark bars */
.darkbars { height: 44px; flex: none; background: #33363f; color: #c8c8c8; font-size: 12px; }
.dk-row { height: 22px; display: flex; align-items: center; white-space: pre; position: relative; }
.dk { display: flex; align-items: center; width: 60px; }
.dk svg { width: 12px; height: 12px; margin: 0 6px 0 0; flex: none; }
.dk-row > .dk:first-child { margin-left: 2px; width: 58px; }
.dk:nth-child(2) { width: 62px; }
.dk:nth-child(4) { width: 84px; }
.dk:nth-child(5) { width: 84px; }
.dk:nth-child(6) { width: 72px; }
.dk:nth-child(7) { width: 83px; }
.dk-plus { width: 16px; height: 16px; margin-left: 75px; }
.dk-i { margin-left: 6px; color: #777; width: 42px; padding-left: 8px; }
.dk-n1 { width: 88px; }
.dk-n2 { width: 334px; }
.idx { padding-left: 0; }
.idx-ico { width: 12px; height: 12px; margin: 0 7px 0 0; flex: none; }
.ix { display: flex; width: 219px; }
.ix b { font-weight: 400; color: #18c030; }
.ix .n1 { margin-left: 4px; width: 58px; }
.ix .n2 { width: 41px; }
.ix .n2b { width: 45px; }
.ix .n3 { width: 43px; }
.ix .n4 { white-space: nowrap; }
.meters { display: flex; gap: 2px; margin-left: 5px; }
.meter { width: 50px; }
.m-box { height: 7px; border: 1px solid #ddd; display: flex; }
.m-box i { flex: 1; border-right: 1px solid #ddd; }
.m-box i:last-child { border-right: 0; }
.m-box .m-r { background: #f00; }
.m-box .m-g { background: #0a8a1e; }
.m-dash { height: 5px; margin-top: 1px; border-top: 2px solid; border-bottom: 2px solid; border-image: repeating-linear-gradient(90deg, currentColor 0 6px, transparent 6px 8px) 2; }
.m-dg { color: #0a8a1e; }
.m-dr { color: #f00; }
.antenna { width: 14px; height: 16px; margin-left: 11px; }
.conn-n { width: 13px; height: 14px; margin-left: 6px; background: #bbb; color: #222; text-align: center; line-height: 14px; }
.conn { margin-left: 5px; }
.st-icons { margin-left: 294px; display: flex; gap: 17px; align-items: center; }
.st-icons svg { width: 15px; height: 15px; }
.clock { margin-left: 11px; color: #bbb; font-size: 12.500px; }

/* side column */
.sidecol { width: 25px; background: #f0f0f0; border-left: 2px solid #a8a8a8; display: flex; flex-direction: column; align-items: center; overflow: hidden; }
.s-ico { flex: none; width: 15px; height: 15px; margin: 4px 0; display: block; }
.s-t { font-size: 10px; line-height: 13px; text-align: center; color: #1e5fd0; background: #fff; border: 1px solid #2a7ae0; }
.s-or { color: #e67010; border-color: #e67010; font-size: 11px; }
.s-sep { flex: none; width: 19px; height: 9px; border-bottom: 1px solid #aaa; margin-bottom: 0; margin-top: -1px; }
.s-sep2 { height: 10px; }
.s-txt { flex: none; height: 23px; line-height: 23px; color: #1f4fa0; font-size: 12px; white-space: nowrap; }
.s-pc { font-size: 11px; letter-spacing: -.5px; }

/* taskbar */
.taskbar { height: 40px; flex: none; background: #1f2a31; display: flex; align-items: center; position: relative; }
.start { width: 18px; height: 18px; margin-left: 9px; flex: none; }
.tsearch { margin-left: 15px; width: 343px; height: 39px; margin-top: 1px; background: #f2f2f2; display: flex; align-items: center; padding-left: 11px; font-size: 14px; color: #333; flex: none; }
.tsearch svg { width: 18px; height: 18px; margin-right: 10px; }
.apps { display: flex; margin-left: 0; height: 40px; }
.app-c { width: 49.500px; height: 40px; display: flex; align-items: center; justify-content: center; position: relative; }
.app-c:first-child svg { width: 15px; height: 17px; }
.app-i { width: 24px; height: 24px; }
.cmb { width: 23px; height: 23px; background: #c8141e; border-radius: 3px; color: #fff; font-size: 8.500px; line-height: 9px; font-weight: 700; display: flex; flex-direction: column; align-items: center; padding-top: 2px; }
.app-ul::after, .app-ul2::after { content: ""; position: absolute; left: 5px; right: 5px; bottom: 0; height: 2px; background: #8bb8dc; }
.app-ul2::after { left: 0; right: 0; }
.app-act { background: #3e4c53; }
.pic { width: 24px; height: 28px; border-radius: 50%; background: radial-gradient(circle at 45% 40%, #dde2d0 0 22%, #8a9078 45%, #4a5040 75%, #9aa08a 100%); }
.tray { position: absolute; inset: 0 0 0 auto; width: 400px; display: flex; align-items: center; color: #fff; font-size: 14px; }
.cloud { width: 24px; height: 16px; margin-left: 8px; }
.temp { margin-left: 9px; }
.fog { margin-left: 8px; }
.t-up { width: 12px; height: 8px; margin-left: 17px; }
.t-qq { width: 14px; height: 18px; margin-left: 10px; }
.t-bat { width: 17px; height: 13px; margin-left: 9px; }
.t-vol { width: 16px; height: 14px; margin-left: 7px; }
.t-wifi { width: 15px; height: 14px; margin-left: 11px; }
.t-ime { margin-left: 7px; }
.t-s { width: 14px; height: 16px; margin-left: 14px; }
.t-time { margin-left: 21px; width: 74px; display: flex; flex-direction: column; align-items: center; font-size: 12.500px; line-height: 20px; }
.t-note { width: 18px; height: 18px; margin-left: 14px; }

.watermark { position: absolute; left: 1209px; top: 13px; font-family: "Noto Sans CJK SC", sans-serif; font-size: 34px; line-height: 44px; font-weight: 900; color: #ececec; -webkit-text-stroke: 3px #5f5f5f; paint-order: stroke fill; white-space: nowrap; opacity: .9; pointer-events: none; }
```
FILE: chart.js
```js
// Minute-by-minute volume bars: each token is colour + the y of the bar's top.
var head = "R538 B536 R525 B547 R571 B591 R592 B593 R607 B600 R608 B599 B601 R610 B615 B610 R614 B614 B613 R609 B613 B612 B614 R612 B615 R618 R620 R619 R617 B620 B619 R618 R621 R623 B609 R615 R621 R621 B623 K622 R620 R623 B623 B624 R620 R620 B620 K623 R623 R621 R622 R618 B619 B623 K623 B624 B622 B622 R624 B623";
var mid = "R620 B622 R618 R621 B620 K623 B622 R619 R621 B623 R620 B618 B621 R623 B613 R614 B619 R617 B622 R620 R622 B621 K624 R621 B623 R619 B620 R622 K623 B622 R621 R623 B620 R618 B622 K624 R622 B621 R620 B623 R622 K624 R619 B622 B620 R623 K622 R620 B621 B622 R623 R619 B622 K624 R621 R623 B620 B623 K622 R621 R620 B618 B622 R622 K624 B620 R621 R623 B621 B623 K622 R622 B624 K623 B622 R620 R621 B619 R622 B623 R622 R618 B612 R616 R610 B621 R618 B622 R612 B620 R619";
var tail = "B622 K621 B620 R619 R604 B605 K613 R606 R592 R589 R570 B593 R584 R549 R586 B584 R564 R571 B592 R593 B605 R584 B593 R609 B613 R600 B611 B610 B606 R605 R614 R606 B619 B616 R567 R457 K605 K613 K612 K615 K620 K614 K621 K620 K620 K619 K618 K618 K621 K624 K625 K622 K610 K620 K624 K621 K620 K620 K625 K626 K626 K626 K625 K624 K626 K623 K625 K626 K624 K622 K625 K626 K623 K625 K624 K626 K623 K622 K625 K624 K626 K625";
var colours = { R: "#f00", B: "#00f", K: "#000" };
var paths = { R: "", B: "", K: "" };
function add(text, start) {
  text.split(" ").forEach(function (tok, n) {
    var x = Math.round(48 + 4.17 * (start + n + 1)) + 0.5;
    paths[tok[0]] += "M" + x + " 627V" + tok.slice(1);
  });
}
add(head, 0);
add(mid, 60);
add(tail, 151);
var host = document.getElementById("vol-bars");
Object.keys(paths).forEach(function (k) {
  var p = document.createElementNS("http://www.w3.org/2000/svg", "path");
  p.setAttribute("d", paths[k]);
  p.setAttribute("fill", "none");
  p.setAttribute("stroke", colours[k]);
  host.appendChild(p);
});
```
